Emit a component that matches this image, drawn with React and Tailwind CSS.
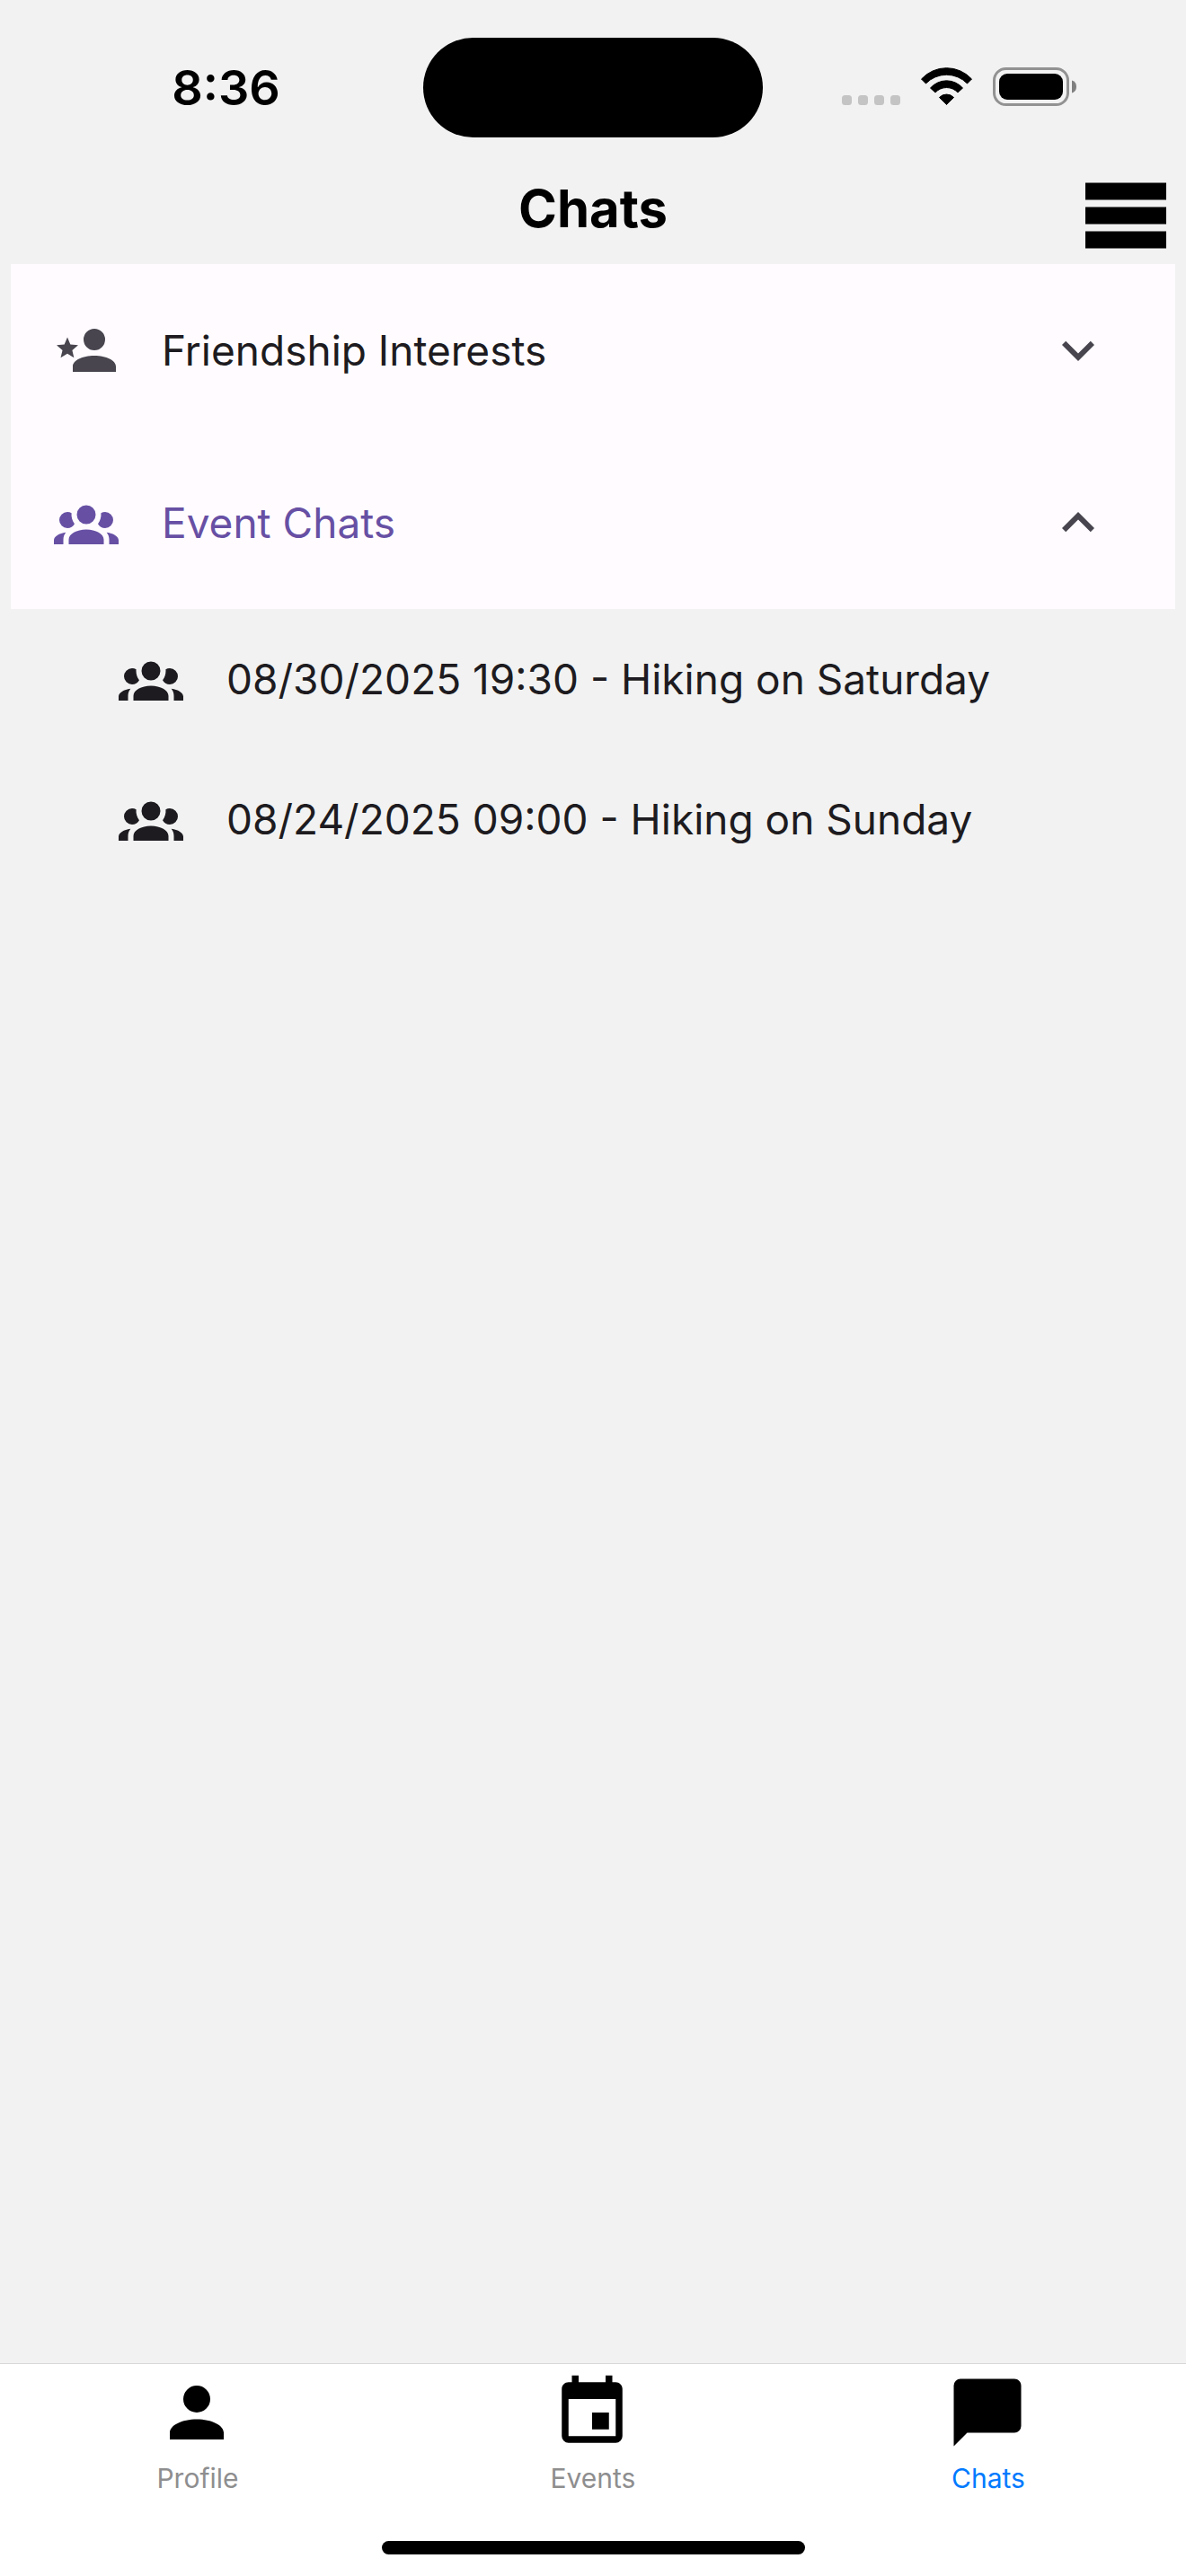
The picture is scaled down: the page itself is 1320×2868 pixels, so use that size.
import React, { useState } from "react";

const ICONS = {
  accountStar:
    "M15,14C10.58,14 7,15.79 7,18V20H23V18C23,15.79 19.42,14 15,14M15,12A4,4 0 0,0 19,8A4,4 0 0,0 15,4A4,4 0 0,0 11,8A4,4 0 0,0 15,12M5,13.28L7.45,14.77L6.8,11.96L9,10.08L6.11,9.83L5,7.19L3.87,9.83L1,10.08L3.18,11.96L2.5,14.77L5,13.28Z",
  accountGroup:
    "M12,5.5A3.5,3.5 0 0,1 15.5,9A3.5,3.5 0 0,1 12,12.5A3.5,3.5 0 0,1 8.5,9A3.5,3.5 0 0,1 12,5.5M5,8C5.56,8 6.08,8.15 6.53,8.42C6.38,9.85 6.8,11.27 7.66,12.38C7.16,13.34 6.16,14 5,14A3,3 0 0,1 2,11A3,3 0 0,1 5,8M19,8A3,3 0 0,1 22,11A3,3 0 0,1 19,14C17.84,14 16.84,13.34 16.34,12.38C17.2,11.27 17.62,9.85 17.47,8.42C17.92,8.15 18.44,8 19,8M5.5,18.25C5.5,16.18 8.41,14.5 12,14.5C15.59,14.5 18.5,16.18 18.5,18.25V20H5.5V18.25M0,20V18.5C0,17.11 1.89,15.94 4.45,15.6C3.86,16.28 3.5,17.22 3.5,18.25V20H0M24,20H20.5V18.25C20.5,17.22 20.14,16.28 19.55,15.6C22.11,15.94 24,17.11 24,18.5V20Z",
  chevronDown:
    "M7.41,8.58L12,13.17L16.59,8.58L18,10L12,16L6,10L7.41,8.58Z",
  chevronUp:
    "M7.41,15.41L12,10.83L16.59,15.41L18,14L12,8L6,14L7.41,15.41Z",
  account:
    "M12,4A4,4 0 0,1 16,8A4,4 0 0,1 12,12A4,4 0 0,1 8,8A4,4 0 0,1 12,4M12,14C16.42,14 20,15.79 20,18V20H4V18C4,15.79 7.58,14 12,14Z",
  calendar:
    "M19,19H5V8H19M16,1V3H8V1H6V3H5C3.89,3 3,3.89 3,5V19A2,2 0 0,0 5,21H19A2,2 0 0,0 21,19V5C21,3.89 20.1,3 19,3H18V1M17,12H12V17H17V12Z",
  message:
    "M20,2H4A2,2 0 0,0 2,4V22L6,18H20A2,2 0 0,0 22,16V4C22,2.89 21.1,2 20,2Z",
};

function Icon({ name, className }) {
  return (
    <svg viewBox="0 0 24 24" className={className} fill="currentColor" aria-hidden="true">
      <path d={ICONS[name]} />
    </svg>
  );
}

function StatusBar() {
  return (
    <div className="grid grid-cols-[1fr_378px_1fr] items-center h-[194px]">
      <div className="pl-8 pt-0.5 text-center text-[54px] leading-[64px] font-semibold">
        8:36
      </div>
      <div className="h-[111px] rounded-full bg-black" />
      <div className="flex items-center justify-end pr-[122px]">
        <svg width="262" height="44" viewBox="0 0 262 44" aria-hidden="true">
          <g fill="#c4c4c4">
            <rect x="1" y="31" width="11" height="11" rx="3.5" />
            <rect x="19" y="31" width="11" height="11" rx="3.5" />
            <rect x="37" y="31" width="11" height="11" rx="3.5" />
            <rect x="55" y="31" width="11" height="11" rx="3.5" />
          </g>
          {/* wifi */}
          <g stroke="#000" strokeWidth="1" strokeLinejoin="round">
            <path d="M89.5 13A38 38 0 0 1 145.5 13L140.5 18A32 32 0 0 0 94.5 18Z" />
            <path d="M99.5 23A24 24 0 0 1 135.5 23L130 28A17 17 0 0 0 105 28Z" />
            <path d="M109.5 33.5A11 11 0 0 1 125.5 33.5L117.5 41.5Z" />
          </g>
          {/* battery */}
          <rect x="170.5" y="1.5" width="82" height="40" rx="13" fill="none" stroke="#929292" strokeWidth="3" />
          <rect x="176" y="7" width="71" height="29" rx="9" />
          <path d="M257 14.5Q262 16 262 21.5Q262 27 257 28.5Z" fill="#808080" />
        </svg>
      </div>
    </div>
  );
}

function Header({ title }) {
  return (
    <header className="grid grid-cols-[1fr_auto_1fr] items-start h-[100px] px-[22px]">
      <span />
      <h1 className="text-[58px] leading-[76px] font-bold">{title}</h1>
      <button type="button" aria-label="Menu" className="justify-self-end pt-[9px] cursor-pointer">
        <svg width="90" height="74" viewBox="0 0 90 74" aria-hidden="true">
          <path d="M0 .5H90V19.5H0ZM0 27.5H90V46.5H0ZM0 54.5H90V73.5H0Z" />
        </svg>
      </button>
    </header>
  );
}

function Accordion({ icon, title, isOpen, onToggle }) {
  return (
    <button
      type="button"
      aria-expanded={isOpen}
      onClick={onToggle}
      className={`flex items-center gap-12 w-full h-48 pl-12 pr-[72px] cursor-pointer bg-[#fffbff] ${
        isOpen ? "text-[#6750a4]" : "text-[#49454f]"
      }`}
    >
      <Icon name={icon} className="size-[72px]" />
      <span
        className={`flex-1 text-left text-[46px] leading-[72px] ${
          isOpen ? "text-[#6750a4]" : "text-[#1d1b20]"
        }`}
      >
        {title}
      </span>
      <Icon
        name={isOpen ? "chevronUp" : "chevronDown"}
        className="size-[72px] text-[#49454f]"
      />
    </button>
  );
}

function ChatItem({ title }) {
  return (
    <li>
      <button
        type="button"
        className="flex items-center gap-12 w-full h-[156px] pl-[120px] pr-12 text-left cursor-pointer"
      >
        <Icon name="accountGroup" className="size-[72px]" />
        <span className="flex-1 text-[46px] leading-[72px]">{title}</span>
      </button>
    </li>
  );
}

const EVENT_CHATS = [
  "08/30/2025 19:30 - Hiking on Saturday",
  "08/24/2025 09:00 - Hiking on Sunday",
];

const TABS = [
  { label: "Profile", icon: "account" },
  { label: "Events", icon: "calendar" },
  { label: "Chats", icon: "message" },
];

export default function App() {
  const [friendsOpen, setFriendsOpen] = useState(false);
  const [eventsOpen, setEventsOpen] = useState(true);

  return (
    <div className="flex flex-col min-h-screen bg-[#f2f2f2] text-black font-['Inter',sans-serif]">
      <StatusBar />
      <Header title="Chats" />

      <main className="flex-1 px-3 text-[#1d1b20]">
        <Accordion
          icon="accountStar"
          title="Friendship Interests"
          isOpen={friendsOpen}
          onToggle={() => setFriendsOpen(!friendsOpen)}
        />
        <Accordion
          icon="accountGroup"
          title="Event Chats"
          isOpen={eventsOpen}
          onToggle={() => setEventsOpen(!eventsOpen)}
        />
        {eventsOpen && (
          <ul>
            {EVENT_CHATS.map((title) => (
              <ChatItem key={title} title={title} />
            ))}
          </ul>
        )}
      </main>

      <footer className="bg-white border-t border-[#d8d8d8] pb-6">
        <nav className="grid grid-cols-3 h-[197px] pt-[9px]">
          {TABS.map(({ label, icon }) => (
            <a
              key={label}
              href="#"
              aria-current={label === "Chats" ? "page" : undefined}
              className="flex flex-col items-center gap-[10px]"
            >
              <span className="pr-0.5">
                <Icon name={icon} className="size-[90px] text-black" />
              </span>
              <span
                className={`text-[30px] leading-[36px] ${
                  label === "Chats" ? "text-[#007aff]" : "text-[#8e8e8f]"
                }`}
              >
                {label}
              </span>
            </a>
          ))}
        </nav>
        <div className="mx-auto w-[471px] h-[15px] rounded-full bg-black" />
      </footer>
    </div>
  );
}
